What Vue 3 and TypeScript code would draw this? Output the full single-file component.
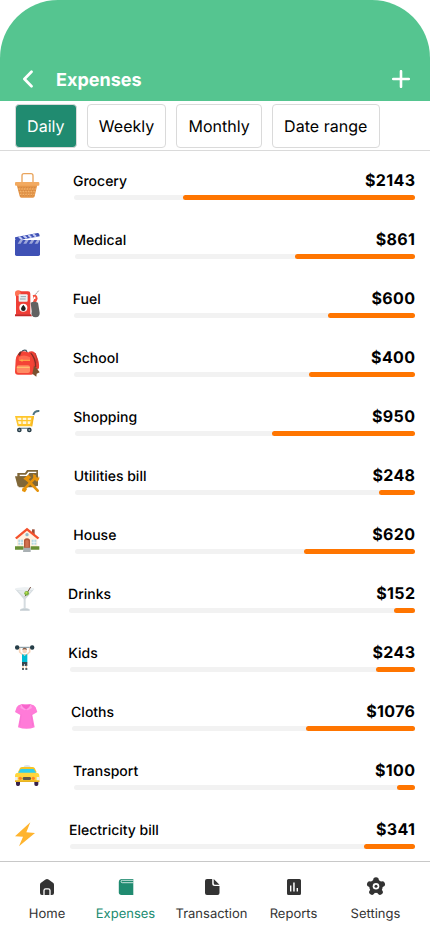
<script setup lang="ts">
import { ref } from 'vue'

interface Expense {
  icon: string
  label: string
  amount: number
  /** Width taken by the icon column, including its gutter */
  lead: number
  /** Filled length of the bar in pixels */
  spent: number
}

const periods: string[] = ['Daily', 'Weekly', 'Monthly', 'Date range']
const period = ref('Daily')

const expenses: Expense[] = [
  { icon: 'basket', label: 'Grocery', amount: 2143, lead: 59.3, spent: 232 },
  { icon: 'clapper', label: 'Medical', amount: 861, lead: 59.6, spent: 120 },
  { icon: 'fuel', label: 'Fuel', amount: 600, lead: 59.1, spent: 87.5 },
  { icon: 'bag', label: 'School', amount: 400, lead: 59, spent: 106 },
  { icon: 'cart', label: 'Shopping', amount: 950, lead: 59.5, spent: 143 },
  { icon: 'tools', label: 'Utilities bill', amount: 248, lead: 60, spent: 36 },
  { icon: 'house', label: 'House', amount: 620, lead: 59.6, spent: 111 },
  { icon: 'drink', label: 'Drinks', amount: 152, lead: 54.4, spent: 21 },
  { icon: 'kid', label: 'Kids', amount: 243, lead: 54.5, spent: 39 },
  { icon: 'shirt', label: 'Cloths', amount: 1076, lead: 57.4, spent: 109 },
  { icon: 'taxi', label: 'Transport', amount: 100, lead: 59.4, spent: 18 },
  { icon: 'bolt', label: 'Electricity bill', amount: 341, lead: 55.3, spent: 51 },
]

const tabs: string[] = ['Home', 'Expenses', 'Transaction', 'Reports', 'Settings']
const tab = ref('Expenses')
</script>

<template>
  <div class="screen">
    <header class="header">
      <button class="icon-button" aria-label="Back">
        <svg width="12" height="18" viewBox="0 0 12 18"><path d="M9.5 1.8 2.4 9l7.1 7.2" fill="none" stroke="#fff" stroke-width="2.7" stroke-linecap="round" stroke-linejoin="round" /></svg>
      </button>
      <h1 class="title">Expenses</h1>
      <button class="icon-button" aria-label="Add">
        <svg width="18" height="18" viewBox="0 0 18 18"><path d="M9 1.2v15.6M1.2 9h15.6" fill="none" stroke="#fff" stroke-width="2.6" stroke-linecap="round" /></svg>
      </button>
    </header>

    <div class="periods">
      <button v-for="p in periods" :key="p" class="chip" :class="{ active: p === period }" @click="period = p">{{ p }}</button>
    </div>

    <main class="list">
      <div v-for="e in expenses" :key="e.label" class="row">
        <div class="lead" :style="{ width: e.lead + 'px' }">
          <svg class="emoji" viewBox="0 0 84 84">
            <g v-if="e.icon === 'basket'">
              <path d="M24 34V11q0-6 6-6h21q6 0 6 6v23" fill="none" stroke="#e9a45c" stroke-width="4" />
              <path d="M8 38h62l-8 35q-1 4-5 4H22q-4 0-5-4z" fill="#e6974a" />
              <path d="M12 47h55M14 55h51M16 63h47M18 71h43" stroke="#cf8846" stroke-width="3" stroke-dasharray="4 4" />
              <path d="M14 51h51M18 59h47M18 67h43" stroke="#f4ba77" stroke-width="3" stroke-dasharray="4 4" />
              <rect x="3" y="30" width="73" height="11" rx="3" fill="#f2aa60" />
            </g>
            <g v-else-if="e.icon === 'clapper'">
              <path d="M3 27h75v43q0 5-5 5H8q-5 0-5-5z" fill="#3f51b5" />
              <path d="M3 19 71 6q5 0 6 10L5 29q-2-4-2-10z" fill="#3f51b5" />
              <path d="M15 17l9 8M29 14l9 8M43 12l9 8M57 9l9 8" stroke="#c5cdf5" stroke-width="6" />
              <path d="M11 38l7-11h9l-7 11zM28 38l7-11h9l-7 11zM45 38l7-11h9l-7 11zM62 38l7-11h9l-7 11z" fill="#9fa8da" />
            </g>
            <g v-else-if="e.icon === 'fuel'">
              <circle cx="13" cy="11" r="10" fill="#ff7355" />
              <path d="M6 74V10q0-6 6-6h30q7 0 7 7v63z" fill="#ef3e36" />
              <circle cx="12" cy="10" r="8" fill="#ff7355" />
              <path d="M3 73h48l3 6H3z" fill="#c62828" />
              <rect x="14" y="13" width="27" height="22" rx="3" fill="#eceff1" />
              <path d="M20 20h16M18 27h17" stroke="#90a4ae" stroke-width="3" />
              <circle cx="28" cy="53" r="12" fill="#fff" />
              <path d="M28 44q8 9 7 12a7 7 0 0 1-14 0q0-4 7-12z" fill="#222" />
              <path d="m64 14 4-5M69 8l5-6" stroke="#999" stroke-width="3" />
              <path d="M56 16q7-4 13 2l2 8-6 14-8-4 3-8z" fill="#f4513e" />
              <path d="M62 20v7" stroke="#fff" stroke-width="4" />
              <path d="M50 38q10-5 22 0l4 24q5 18-10 20-17 0-13-18z" fill="#616161" />
            </g>
            <g v-else-if="e.icon === 'bag'">
              <path d="M23 10q3-9 13-6l4 8" fill="none" stroke="#455a64" stroke-width="4" />
              <path d="M43 9q18-7 24 10 10 20 8 39l-15 10z" fill="#ea4136" />
              <path d="M50 13q15 14 15 41" fill="none" stroke="#832d27" stroke-width="4" />
              <path d="M64 12q6 17 5 31" fill="none" stroke="#a8352d" stroke-width="2" />
              <path d="M10 18Q20 4 37 8q18 4 19 22l4 35q0 12-9 12H12Q3 77 3 68l2-35q0-9 5-15z" fill="#f44336" />
              <path d="M12 17q6-13 11-9l-5 13" fill="#702d27" />
              <path d="M14 25q15-11 34 0v8H14z" fill="#ff6b50" />
              <path d="M16 34h32M24 31v7" stroke="#ffb54e" stroke-width="3" />
              <rect x="8" y="49" width="40" height="23" rx="6" fill="#ff8b62" />
              <path d="M9 55h38" stroke="#ffca71" stroke-width="3" />
              <path d="m60 50 8 8 9 12-9 4-1 9-12-9z" fill="#795030" />
            </g>
            <g v-else-if="e.icon === 'cart'">
              <path d="M3 24h57l-7 31H11z" fill="#ffc62b" />
              <path d="M10 29h12v7H11zM26 29h11v7H26zM41 29h11l-2 7h-9zM12 40h10v8h-8zM26 40h11v8H26zM41 40h9l-2 8h-7z" fill="#fff7dc" />
              <path d="M58 24l-5 31" fill="none" stroke="#f6b622" stroke-width="4" />
              <path d="M76 9q-15-1-18 12" fill="none" stroke="#4e7380" stroke-width="6" />
              <path d="M14 61h36" stroke="#78909c" stroke-width="4" />
              <circle cx="16" cy="66" r="7" fill="#263b45" /><circle cx="46" cy="66" r="7" fill="#263b45" />
              <circle cx="16" cy="66" r="3" fill="#90a4ae" /><circle cx="46" cy="66" r="3" fill="#90a4ae" />
            </g>
            <g v-else-if="e.icon === 'tools'">
              <path d="M10 28V18h23l6-9h33v47l-16 5H14z" fill="#806738" />
              <path d="M17 28v-5h19l7-9h24v4H46l-6 10z" fill="#fff" />
              <path d="M3 28h62v30H11z" fill="#806738" />
              <path d="M29 68 64 32M38 36l33 35" fill="none" stroke="#e6930b" stroke-width="8" stroke-linecap="round" />
              <path d="M28 35 43 23l8 8-12 12zM58 35l-1-14 9 4-1 6 8 1 2-5q4 11-6 17zM26 62q8-2 13 5l-6 9-9-4z" fill="#e6930b" />
            </g>
            <g v-else-if="e.icon === 'house'">
              <rect x="54" y="10" width="8" height="19" fill="#9c4e37" />
              <path d="M9 35 39 10l31 25v31H9z" fill="#fff1df" />
              <path d="M3 35 39 5l37 30-5 5-32-26L8 40z" fill="#f4512c" />
              <circle cx="39" cy="26" r="5" fill="#90bac7" />
              <rect x="13" y="41" width="14" height="15" fill="#b4d8e2" /><rect x="53" y="41" width="14" height="15" fill="#b4d8e2" />
              <path d="M20 40v17M60 40v17M12 49h16M52 49h16" stroke="#fff" stroke-width="2" />
              <path d="M30 66V41q9-8 18 0v25z" fill="#b55738" />
              <path d="M34 64V44q5-4 10 0v20z" fill="#d17250" />
              <path d="M3 61h26v10H3zM50 61h26v10H50z" fill="#689035" />
              <path d="M29 65h21v13H27z" fill="#a9b0b3" />
            </g>
            <g v-else-if="e.icon === 'drink'">
              <path d="M3 12q29-8 58 0L35 42v27q12 1 12 6H18q1-5 11-6V42z" fill="#d5dce0" />
              <ellipse cx="32" cy="12" rx="29" ry="5" fill="#edf1f3" />
              <path d="M12 18h40L33 37z" fill="#e6ebed" />
              <path d="M33 34 50 6" stroke="#795548" stroke-width="3" />
              <circle cx="38" cy="25" r="7" fill="#7cb342" /><circle cx="37" cy="23" r="3" fill="#c5e34b" />
              <path d="M18 74q14-5 29 0v3H18z" fill="#c4cdd2" />
            </g>
            <g v-else-if="e.icon === 'kid'">
              <path d="M5 10h54" stroke="#78909c" stroke-width="3" />
              <path d="M17 11v13l10 9M47 11v13l-10 9" fill="none" stroke="#f8d4b8" stroke-width="5" />
              <path d="M24 31h16v24H24z" fill="#00bcd4" />
              <path d="M27 31l5 5 5-5z" fill="#f7d4b8" />
              <circle cx="32" cy="21" r="7" fill="#f8d8c0" /><path d="M25 18q0-7 7-7t7 7q-7-4-14 0z" fill="#885e48" />
              <path d="M24 54h16v12h-7v-6h-2v6h-7z" fill="#37474f" /><path d="M27 65v9M37 65v9" stroke="#f5cfb0" stroke-width="4" />
              <path d="M24 75h6M34 75h6" stroke="#263238" stroke-width="5" />
              <rect x="3" y="4" width="13" height="13" rx="6" fill="#263e48" /><rect x="48" y="4" width="13" height="13" rx="6" fill="#263e48" />
            </g>
            <g v-else-if="e.icon === 'shirt'">
              <path d="M22 4h28q11 1 15 9l5 14-15 9 7 37q-24 9-50 0l7-37L3 27 8 13q4-8 14-9z" fill="#ff7bd8" />
              <path d="M22 4q13 5 28 0-5 13-14 16-10-3-14-16z" fill="#f765cc" />
              <path d="M22 4 19 15l13 7 5-3Q25 15 22 4zM50 4l4 11-13 7-5-3Q47 15 50 4z" fill="#ff9de5" />
              <path d="M21 34q-1 21-4 35M52 34q2 20 4 35" fill="none" stroke="#f56fcf" stroke-width="2" />
            </g>
            <g v-else-if="e.icon === 'taxi'">
              <path d="M29 16q0-7 10-7t11 7z" fill="#dde5e8" />
              <path d="M12 31 18 18q2-3 7-3h30q5 0 7 3l6 13z" fill="#f6c425" />
              <path d="M12 33 20 21h39l8 12z" fill="#2eceed" />
              <path d="M6 57h12v10q0 5-5 5h-2q-5 0-5-5zM61 57h12v10q0 5-5 5h-2q-5 0-5-5z" fill="#35204a" />
              <path d="M3 41q0-9 10-9h53q10 0 10 9v19H3z" fill="#ffd63d" />
              <path d="M3 55h73v5H3z" fill="#e9b320" />
              <rect x="26" y="45" width="25" height="9" rx="4" fill="#5f564a" />
              <circle cx="19" cy="49" r="5" fill="#ff8527" /><circle cx="58" cy="49" r="5" fill="#ff8527" />
              <path d="M3 45h8v10H3zM68 45h8v10h-8z" fill="#eceff1" />
            </g>
            <g v-else>
              <path d="M49 4 3 46l24 1-12 29 48-40-26-2z" fill="#ffb42e" />
            </g>
          </svg>
        </div>
        <div class="body">
          <div class="texts">
            <span class="label">{{ e.label }}</span>
            <span class="amount">${{ e.amount }}</span>
          </div>
          <div class="track"><div class="fill" :style="{ width: e.spent + 'px' }"></div></div>
        </div>
      </div>
    </main>

    <nav class="nav">
      <button v-for="t in tabs" :key="t" class="tab" :class="{ active: t === tab }" @click="tab = t">
        <svg class="tab-icon" width="20" height="20" viewBox="0 0 20 20" fill="currentColor">
          <g v-if="t === 'Home'">
            <path d="M10 2q.7 0 1.5.6l4.500 3.200q1 .7 1 2V16q0 2-2 2H5q-2 0-2-2V7.800q0-1.300 1-2l4.500-3.200Q9.300 2 10 2z" />
            <path d="M7 18.200v-4.700q0-1.700 1.700-1.700h2.600q1.700 0 1.700 1.700v4.700" fill="none" stroke="#fff" stroke-width="1.300" />
          </g>
          <g v-else-if="t === 'Expenses'">
            <path d="M6.300 2h11v16H5.500q-2.700 0-2.700-2.700V5Q2.800 2 6.300 2z" />
            <path d="M17.300 3.300H6.300q-1.200 0-1.200 1.200t1.200 1.200h11" fill="none" stroke="#fff" stroke-width=".9" opacity=".85" />
          </g>
          <path v-else-if="t === 'Transaction'" d="M5 2h5.200v4.500Q10.200 9 12.700 9H17.500v7q0 2-2 2H5q-2 0-2-2V4q0-2 2-2zM11.700 2l5.800 5.700h-4.300q-1.500 0-1.500-1.500z" />
          <path v-else-if="t === 'Reports'" fill-rule="evenodd" d="M4.500 2h11Q17 2 17 3.500v13q0 1.500-1.500 1.500h-11Q3 18 3 16.500v-13Q3 2 4.500 2zM6 8.500v6h1.400v-6zm3.200-3v9h1.500v-9zm3.400 5.500v3.500H14V11z" />
          <g v-else>
            <path d="M10 3v6M10 9.200 3.800 7.200M10 9.200l6.200-2M10 9.200l-4 5.800M10 9.200l4 5.800" stroke="currentColor" stroke-width="5.600" stroke-linecap="round" />
            <circle cx="10" cy="9.200" r="6.800" /><circle cx="10" cy="9.200" r="3.300" fill="#fff" /><circle cx="10" cy="9.200" r="1.500" />
          </g>
        </svg>
        <span>{{ t }}</span>
      </button>
    </nav>
  </div>
</template>

<style>
body {
  background: #fff;
}
</style>

<style scoped>
.screen {
  width: 430px;
  height: 932px;
  display: flex;
  flex-direction: column;
  overflow: hidden;
  background: #fff;
  color: #000;
  font-family: Inter, "Liberation Sans", sans-serif;
  text-rendering: geometricPrecision;
}
button {
  border: 0;
  padding: 0;
  background: none;
  font: inherit;
  color: inherit;
  text-rendering: inherit;
}
.header {
  flex: none;
  box-sizing: border-box;
  height: 101px;
  padding: 57px 20px 0 22px;
  display: flex;
  align-items: center;
  background: #55c590;
  border-radius: 58px 58px 0 0;
}
.icon-button {
  display: flex;
}
.title {
  flex: 1;
  margin: 4px 0 0 22px;
  font-size: 18px;
  line-height: 22px;
  font-weight: 700;
  color: #fff;
}
.periods {
  flex: none;
  box-sizing: border-box;
  height: 50px;
  padding: 3px 15px 0;
  display: flex;
  gap: 10px;
  border-bottom: 1px solid #dadada;
}
.chip {
  box-sizing: border-box;
  height: 44px;
  padding: 0 11.1px;
  border: 1px solid #dadada;
  border-radius: 4px;
  font-size: 16px;
  letter-spacing: 0.03px;
  white-space: nowrap;
}
.chip.active {
  background: #208b70;
  color: #fff;
}
.list {
  flex: none;
  height: 710px;
  padding: 0 15px;
}
.row {
  height: 59px;
  display: flex;
}
.lead {
  flex: none;
}
.emoji {
  display: block;
  width: 28px;
  height: 28px;
  margin: 21px 0 0 -1px;
}
.body {
  flex: 1;
  padding-top: 19px;
}
.texts {
  height: 25px;
  display: flex;
  justify-content: space-between;
  margin-left: -1.3px;
}
.label {
  font-size: 14px;
  line-height: 24px;
  font-weight: 500;
}
.amount {
  font-size: 16px;
  line-height: 21px;
  font-weight: 700;
  letter-spacing: 0.35px;
  margin-right: -0.35px;
}
.track {
  height: 5px;
  display: flex;
  justify-content: flex-end;
  border-radius: 3px;
  background: #f2f2f2;
}
.fill {
  height: 5px;
  border-radius: 3px;
  background: #ff7500;
}
.nav {
  flex: 1;
  padding: 15px 14px 0 7px;
  display: grid;
  grid-template-columns: 80px 77px 95px 69px 95px;
  align-items: start;
  border-top: 1px solid #c8c8c8;
  color: #333;
}
.tab {
  display: flex;
  flex-direction: column;
  align-items: center;
  gap: 9px;
  font-size: 13px;
  line-height: 16px;
}
.tab.active {
  color: #208b70;
}
.tab-icon {
  display: block;
}
</style>
